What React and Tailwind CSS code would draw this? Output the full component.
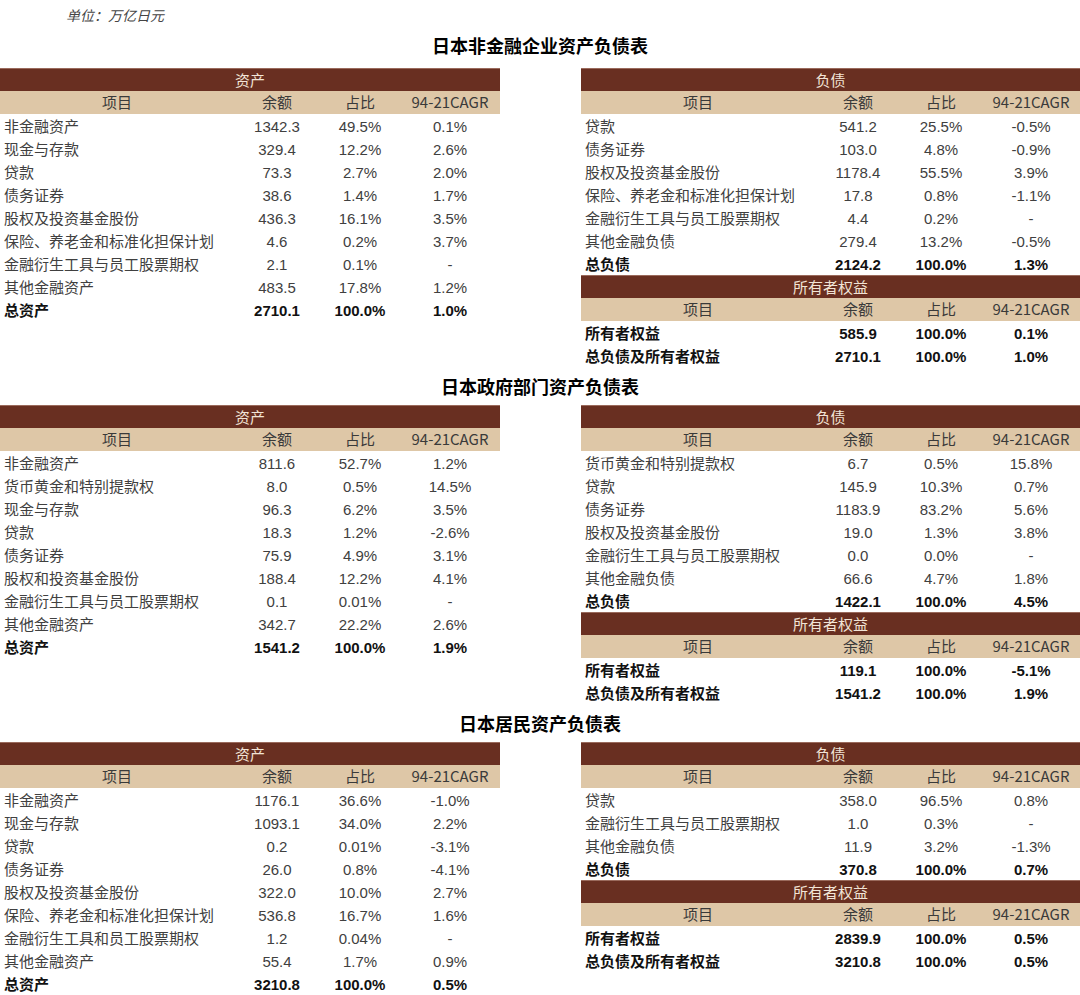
const FONT = "font-['Liberation_Sans','Noto_Sans_CJK_SC',sans-serif]";
const CJK = "font-['Noto_Sans_CJK_SC',sans-serif]";
const COLS = "grid grid-cols-[234px_86px_80px_100px]";

const sections = [
  {
    title: "日本非金融企业资产负债表",
    first: true,
    assets: [
      ["非金融资产", "1342.3", "49.5%", "0.1%"],
      ["现金与存款", "329.4", "12.2%", "2.6%"],
      ["贷款", "73.3", "2.7%", "2.0%"],
      ["债务证券", "38.6", "1.4%", "1.7%"],
      ["股权及投资基金股份", "436.3", "16.1%", "3.5%"],
      ["保险、养老金和标准化担保计划", "4.6", "0.2%", "3.7%"],
      ["金融衍生工具与员工股票期权", "2.1", "0.1%", "-"],
      ["其他金融资产", "483.5", "17.8%", "1.2%"],
      ["总资产", "2710.1", "100.0%", "1.0%", true],
    ],
    liabilities: [
      ["贷款", "541.2", "25.5%", "-0.5%"],
      ["债务证券", "103.0", "4.8%", "-0.9%"],
      ["股权及投资基金股份", "1178.4", "55.5%", "3.9%"],
      ["保险、养老金和标准化担保计划", "17.8", "0.8%", "-1.1%"],
      ["金融衍生工具与员工股票期权", "4.4", "0.2%", "-"],
      ["其他金融负债", "279.4", "13.2%", "-0.5%"],
      ["总负债", "2124.2", "100.0%", "1.3%", true],
    ],
    equity: [
      ["所有者权益", "585.9", "100.0%", "0.1%", true],
      ["总负债及所有者权益", "2710.1", "100.0%", "1.0%", true],
    ],
  },
  {
    title: "日本政府部门资产负债表",
    assets: [
      ["非金融资产", "811.6", "52.7%", "1.2%"],
      ["货币黄金和特别提款权", "8.0", "0.5%", "14.5%"],
      ["现金与存款", "96.3", "6.2%", "3.5%"],
      ["贷款", "18.3", "1.2%", "-2.6%"],
      ["债务证券", "75.9", "4.9%", "3.1%"],
      ["股权和投资基金股份", "188.4", "12.2%", "4.1%"],
      ["金融衍生工具与员工股票期权", "0.1", "0.01%", "-"],
      ["其他金融资产", "342.7", "22.2%", "2.6%"],
      ["总资产", "1541.2", "100.0%", "1.9%", true],
    ],
    liabilities: [
      ["货币黄金和特别提款权", "6.7", "0.5%", "15.8%"],
      ["贷款", "145.9", "10.3%", "0.7%"],
      ["债务证券", "1183.9", "83.2%", "5.6%"],
      ["股权及投资基金股份", "19.0", "1.3%", "3.8%"],
      ["金融衍生工具与员工股票期权", "0.0", "0.0%", "-"],
      ["其他金融负债", "66.6", "4.7%", "1.8%"],
      ["总负债", "1422.1", "100.0%", "4.5%", true],
    ],
    equity: [
      ["所有者权益", "119.1", "100.0%", "-5.1%", true],
      ["总负债及所有者权益", "1541.2", "100.0%", "1.9%", true],
    ],
  },
  {
    title: "日本居民资产负债表",
    assets: [
      ["非金融资产", "1176.1", "36.6%", "-1.0%"],
      ["现金与存款", "1093.1", "34.0%", "2.2%"],
      ["贷款", "0.2", "0.01%", "-3.1%"],
      ["债务证券", "26.0", "0.8%", "-4.1%"],
      ["股权及投资基金股份", "322.0", "10.0%", "2.7%"],
      ["保险、养老金和标准化担保计划", "536.8", "16.7%", "1.6%"],
      ["金融衍生工具和员工股票期权", "1.2", "0.04%", "-"],
      ["其他金融资产", "55.4", "1.7%", "0.9%"],
      ["总资产", "3210.8", "100.0%", "0.5%", true],
    ],
    liabilities: [
      ["贷款", "358.0", "96.5%", "0.8%"],
      ["金融衍生工具与员工股票期权", "1.0", "0.3%", "-"],
      ["其他金融负债", "11.9", "3.2%", "-1.3%"],
      ["总负债", "370.8", "100.0%", "0.7%", true],
    ],
    equity: [
      ["所有者权益", "2839.9", "100.0%", "0.5%", true],
      ["总负债及所有者权益", "3210.8", "100.0%", "0.5%", true],
    ],
  },
];

function Band({ label }) {
  return (
    <div className={`h-[23px] bg-[#692f21] border-t border-[#9a6a5c] flex items-center justify-center text-[15px] text-[#f2e4d6] ${CJK}`}>
      {label}
    </div>
  );
}

function HeadRow() {
  return (
    <div className={`${COLS} h-[23px] bg-[#dec7a7] items-center text-[15px] text-[#3a3a3a] ${CJK}`}>
      <span className="text-center">项目</span>
      <span className="text-center">余额</span>
      <span className="text-center">占比</span>
      <span className="text-center">94-21CAGR</span>
    </div>
  );
}

function Row({ row }) {
  const [name, amount, share, cagr, bold] = row;
  return (
    <div
      className={`${COLS} h-[23px] pt-[2px] items-center text-[15px] ${FONT} ${
        bold ? "font-bold text-[#111]" : "text-[#404040]"
      }`}
    >
      <span className="pl-1 whitespace-nowrap">{name}</span>
      <span className="text-center">{amount}</span>
      <span className="text-center">{share}</span>
      <span className="text-center">{cagr}</span>
    </div>
  );
}

function Section({ data }) {
  return (
    <div>
      <div
        className={`flex items-center justify-center text-[18px] font-bold text-black ${CJK} ${
          data.first ? "h-[41px] pb-[4px]" : "h-[38px]"
        }`}
      >
        {data.title}
      </div>
      <div className="flex justify-between">
        {/* 资产 */}
        <div className="w-[500px]">
          <Band label="资产" />
          <HeadRow />
          {data.assets.map((r) => (
            <Row key={r[0]} row={r} />
          ))}
        </div>

        {/* 负债 + 所有者权益 */}
        <div className="w-[499px]">
          <Band label="负债" />
          <HeadRow />
          {data.liabilities.map((r) => (
            <Row key={r[0]} row={r} />
          ))}
          <Band label="所有者权益" />
          <HeadRow />
          {data.equity.map((r) => (
            <Row key={r[0]} row={r} />
          ))}
        </div>
      </div>
    </div>
  );
}

export default function App() {
  return (
    <div className="w-[1080px] h-[995px] bg-white overflow-hidden">
      <div className={`h-[27px] pl-[66px] pt-[5px] text-[14px] italic text-[#444] ${CJK}`}>
        单位：万亿日元
      </div>
      <div className="flex flex-col">
        {sections.map((s) => (
          <Section key={s.title} data={s} />
        ))}
      </div>
    </div>
  );
}
